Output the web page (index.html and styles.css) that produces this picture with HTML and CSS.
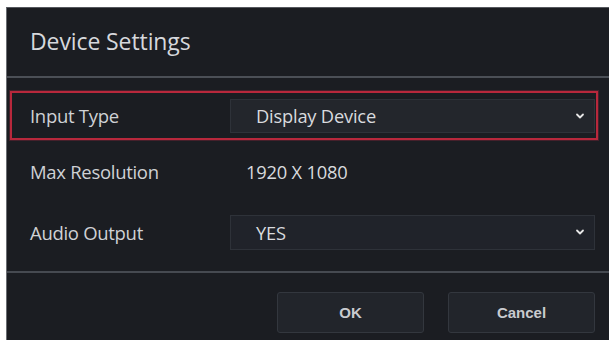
FILE: index.html
```html
<!DOCTYPE html>
<html>
  <head>
    <meta charset="utf-8" />
    <link rel="stylesheet" href="styles.css">
  </head>
  <body>
    <div class="dialog">
      <div class="dialog-header">
        <h3>Device Settings</h3>
      </div>

      <div class="dialog-body">
        <div class="field-row focused">
          <span class="field-label">Input Type</span>
          <div class="select">
            <span class="select-value">Display Device</span>
            <svg class="chevron" width="10" height="8" viewBox="0 0 10 8">
              <path d="M2 2.5 L5 5.5 L8 2.5" fill="none" stroke="#e6e6e6" stroke-width="1.8" stroke-linecap="round" stroke-linejoin="round"/>
            </svg>
          </div>
        </div>

        <div class="field-row tall">
          <span class="field-label">Max Resolution</span>
          <span class="field-text">1920 X 1080</span>
        </div>

        <div class="field-row last">
          <span class="field-label">Audio Output</span>
          <div class="select">
            <span class="select-value">YES</span>
            <svg class="chevron" width="10" height="8" viewBox="0 0 10 8">
              <path d="M2 2.5 L5 5.5 L8 2.5" fill="none" stroke="#e6e6e6" stroke-width="1.8" stroke-linecap="round" stroke-linejoin="round"/>
            </svg>
          </div>
        </div>
      </div>

      <div class="dialog-footer">
        <button class="btn">OK</button>
        <button class="btn">Cancel</button>
      </div>
    </div>
  </body>
</html>
```

FILE: styles.css
```css
* {
  margin: 0;
  padding: 0;
  box-sizing: border-box;
}

body {
  width: 609px;
  height: 340px;
  background: #ffffff;
  font-family: "Open Sans", "Noto Sans", sans-serif;
  color: #d2d4d8;
  overflow: hidden;
}

.dialog {
  margin: 7px 0 0 6px;
  height: 333px;
  background: #1b1d22;
  border-left: 1px solid #6a6d72;
  border-top: 1px solid #55585e;
}

.dialog-header {
  height: 70px;
  padding: 0 0 0 23px;
  display: flex;
  align-items: center;
  border-bottom: 2px solid #4b4f56;
}

.dialog-header h3 {
  font-size: 23px;
  font-weight: 400;
  color: #d6d8dc;
  margin-top: -2px;
  letter-spacing: -0.1px;
}

.dialog-body {
  padding: 13px 11px 9px 3px;
  border-bottom: 2px solid #464a51;
}

.field-row {
  display: flex;
  align-items: center;
  height: 60px;
  padding: 0 3px 0 20px;
}

.field-row.focused {
  height: 49px;
  border: 2px solid #b8283c;
  box-shadow: 0 0 0 1px rgba(150, 40, 60, 0.35);
  padding: 0 1px 0 18px;
}

.field-row.tall {
  height: 62px;
}

.field-label {
  width: 200px;
  font-size: 18.5px;
  color: #cfd1d5;
  letter-spacing: -0.3px;
}

.select {
  flex: 1;
  height: 35px;
  display: flex;
  align-items: center;
  justify-content: space-between;
  padding: 0 9px 0 25px;
  background: #20232a;
  border: 1px solid #2e3239;
}

.focused .select {
  height: 34px;
  background: #23262c;
}

.select-value {
  font-size: 18.3px;
  color: #d8dade;
  letter-spacing: -0.2px;
}

.field-text {
  font-size: 18.3px;
  color: #d8dade;
  padding-left: 16px;
  letter-spacing: -0.2px;
}

.dialog-footer {
  display: flex;
  justify-content: flex-end;
  gap: 24px;
  padding: 19px 14px 0 0;
}

.btn {
  width: 147px;
  height: 41px;
  background: #22252b;
  border: 1px solid #33373e;
  border-radius: 3px;
  font-family: "Liberation Sans", Arial, sans-serif;
  font-weight: 700;
  font-size: 15px;
  color: #c9cbcf;
}
```
